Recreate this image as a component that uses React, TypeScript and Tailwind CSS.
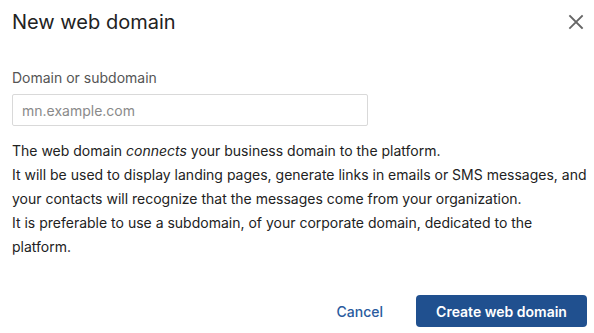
import React from "react";

export default function App() {
  return (
    <div className="w-[594px] h-[333px] bg-white flex flex-col text-[#222]" style={{ fontFamily: "Inter, 'Noto Sans', sans-serif" }}>
      <div className="flex items-center justify-between pl-3 pr-[6px] pt-[4px] h-[40px]">
        <h1 className="text-[20px] text-[#222] font-normal">New web domain</h1>
        <button className="w-6 h-6 flex items-center justify-center text-[#666]">
          <svg width="16" height="16" viewBox="0 0 16 16" fill="none" stroke="currentColor" strokeWidth="1.8" strokeLinecap="square">
            <path d="M2 2L14 14M14 2L2 14" />
          </svg>
        </button>
      </div>
      <div className="px-3 pt-[28px]">
        <label className="block text-[14px] text-[#555] leading-[20px]">Domain or subdomain</label>
        <input
          className="mt-[6px] w-[356px] h-[32px] border border-[#d9d9d9] rounded-[2px] px-[9px] text-[14px] outline-none placeholder:text-[#8a8a8a]"
          placeholder="mn.example.com"
        />
        <div className="mt-[13px] w-[580px] text-[14px] leading-[24px] text-[#222]">
          <p>
            The web domain <em>connects</em> your business domain to the platform.
          </p>
          <p>
            It will be used to display landing pages, generate links in emails or SMS messages, and your contacts will recognize that the messages come from your organization.
          </p>
          <p>It is preferable to use a subdomain, of your corporate domain, dedicated to the platform.</p>
        </div>
      </div>
      <div className="flex justify-end items-center gap-[33px] pr-[7px] mt-auto mb-[6px]">
        <button className="text-[14px] text-[#2a5b9e] font-medium">Cancel</button>
        <button className="w-[171px] h-[32px] rounded-[4px] bg-[#20508f] text-white text-[14px] font-semibold">Create web domain</button>
      </div>
    </div>
  );
}
